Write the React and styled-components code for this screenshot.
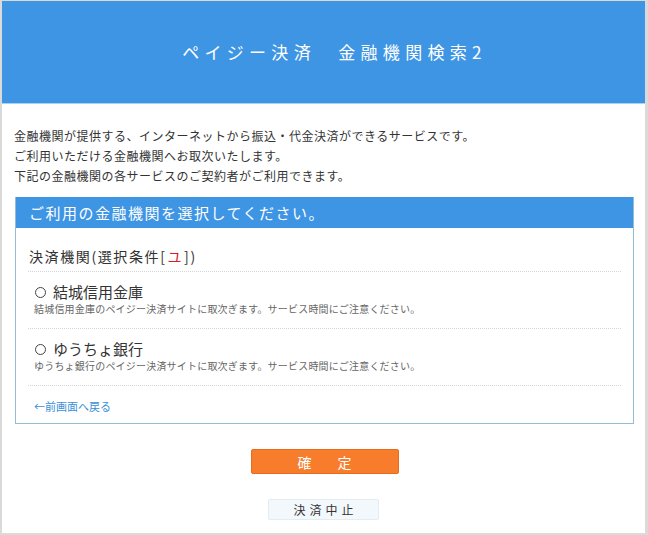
import styled, { createGlobalStyle } from "styled-components";

const GlobalStyle = createGlobalStyle`
	html, body {
		margin: 0;
		padding: 0;
		background: #ffffff;
	}

	body {
		font-family: "Noto Sans CJK JP", "Noto Sans", sans-serif;
		color: #333333;
	}
`;

const Frame = styled.div`
	box-sizing: border-box;
	width: 648px;
	height: 535px;
	border: 2px solid #dadada;
	border-top-width: 1px;
	border-right-width: 3px;
	background: #ffffff;
	overflow: hidden;
`;

const Header = styled.header`
	height: 102px;
	background: #3e95e4;
	border-bottom: 1px solid #a8d1f2;
	display: flex;
	align-items: center;
	justify-content: center;
`;

const Title = styled.h1`
	margin: 0;
	padding: 0 0 2px 22px;
	font-size: 17px;
	font-weight: 400;
	letter-spacing: 5.3px;
	color: #ffffff;
`;

const Main = styled.main`
	padding: 22px 11px 0 12px;
`;

const Intro = styled.p`
	margin: 0;
	font-size: 12px;
	line-height: 20px;
	letter-spacing: 0.5px;
	color: #333333;
`;

const Panel = styled.section`
	margin-top: 11px;
	margin-left: 1px;
	border: 1px solid #93bcd8;
	border-top: none;
`;

const PanelHeader = styled.div`
	height: 31px;
	background: #3e95e4;
	display: flex;
	align-items: center;
	padding-left: 13px;
	font-size: 15px;
	letter-spacing: 1.5px;
	color: #ffffff;
`;

const PanelBody = styled.div`
	padding: 0 12px;
`;

const Row = styled.div`
	border-bottom: 1px dotted #cfd6dd;
	padding: ${(p) => p.$pad || "11px 0 11px 6px"};
`;

const Condition = styled.div`
	font-size: 14px;
	line-height: 20px;
	letter-spacing: 1.6px;
	color: #333333;
`;

const Red = styled.span`
	color: #d41c2c;
	padding: 0 1px;
`;

const BankName = styled.label`
	display: flex;
	align-items: center;
	gap: 7px;
	font-size: 15px;
	line-height: 18px;
	color: #333333;
	cursor: pointer;
`;

const Radio = styled.span`
	box-sizing: border-box;
	width: 11px;
	height: 11px;
	border: 1px solid #444444;
	border-radius: 50%;
	margin-left: 1px;
`;

const Desc = styled.div`
	font-size: 10px;
	line-height: 16px;
	letter-spacing: 0.2px;
	color: #666666;
`;

const BackLink = styled.a`
	display: block;
	padding: 12px 0 9px 6px;
	font-size: 11px;
	line-height: 16px;
	color: #3a8fd6;
	text-decoration: none;
`;

const Actions = styled.div`
	display: flex;
	flex-direction: column;
	align-items: center;
	gap: 25px;
	margin-top: 25px;
	padding-right: 1px;
`;

const ConfirmButton = styled.button`
	width: 148px;
	height: 25px;
	margin-left: 2px;
	border: 1px solid #e76d1c;
	border-radius: 2px;
	background: #f77d2c;
	color: #ffffff;
	font-family: inherit;
	font-size: 14px;
	letter-spacing: 6px;
	padding: 0 0 0 6px;
`;

const CancelButton = styled.button`
	width: 111px;
	height: 21px;
	border: 1px solid #e3ebf3;
	border-radius: 2px;
	background: #f3f8fd;
	color: #333333;
	font-family: inherit;
	font-size: 12px;
	letter-spacing: 4px;
	padding: 0 0 0 4px;
`;

const banks = [
	{ id: "yuki", name: "結城信用金庫" },
	{ id: "yucho", name: "ゆうちょ銀行" },
];

export default function App() {
	return (
		<>
			<GlobalStyle />
			<Frame>
				<Header>
					<Title>ペイジー決済　金融機関検索2</Title>
				</Header>
				<Main>
					<Intro>
						金融機関が提供する、インターネットから振込・代金決済ができるサービスです。
						<br />
						ご利用いただける金融機関へお取次いたします。
						<br />
						下記の金融機関の各サービスのご契約者がご利用できます。
					</Intro>
					<Panel>
						<PanelHeader>ご利用の金融機関を選択してください。</PanelHeader>
						<PanelBody>
							<Row $pad="18px 0 5px 1px">
								<Condition>
									決済機関(選択条件[<Red>ユ</Red>])
								</Condition>
							</Row>
							{banks.map((bank) => (
								<Row key={bank.id}>
									<BankName>
										<Radio />
										{bank.name}
									</BankName>
									<Desc>
										{bank.name}のペイジー決済サイトに取次ぎます。サービス時間にご注意ください。
									</Desc>
								</Row>
							))}
							<BackLink href="#">←前画面へ戻る</BackLink>
						</PanelBody>
					</Panel>
					<Actions>
						<ConfirmButton>確　定</ConfirmButton>
						<CancelButton>決済中止</CancelButton>
					</Actions>
				</Main>
			</Frame>
		</>
	);
}
